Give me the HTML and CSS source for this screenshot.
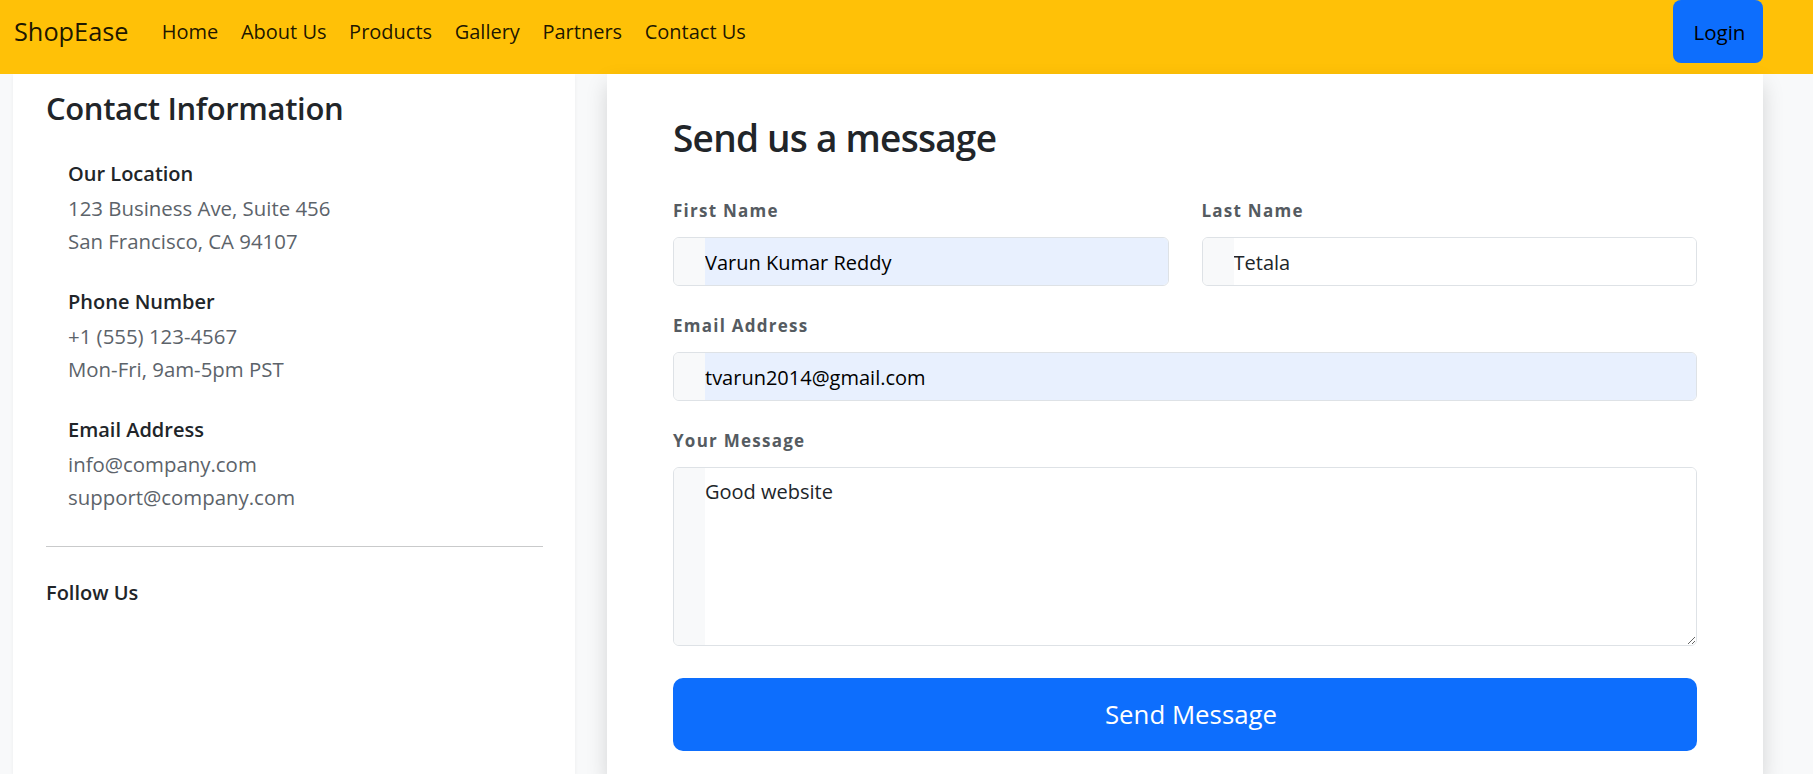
FILE: index.html
```html
<!DOCTYPE html>
<html lang="en">
<head>
<meta charset="utf-8">
<title>ShopEase - Contact Us</title>
<link rel="stylesheet" href="styles.css">
</head>
<body>
<nav class="navbar">
  <a class="brand" href="#">ShopEase</a>
  <ul class="nav-links">
    <li><a href="#">Home</a></li>
    <li><a href="#">About Us</a></li>
    <li><a href="#">Products</a></li>
    <li><a href="#">Gallery</a></li>
    <li><a href="#">Partners</a></li>
    <li><a href="#">Contact Us</a></li>
  </ul>
  <button class="login-btn" type="button">Login</button>
</nav>

<main class="page">
  <section class="info-card">
    <h3 class="info-title">Contact Information</h3>

    <div class="info-block">
      <h6 class="info-head">Our Location</h6>
      <p class="info-text">123 Business Ave, Suite 456<br>San Francisco, CA 94107</p>
    </div>

    <div class="info-block">
      <h6 class="info-head">Phone Number</h6>
      <p class="info-text">+1 (555) 123-4567<br>Mon-Fri, 9am-5pm PST</p>
    </div>

    <div class="info-block last">
      <h6 class="info-head">Email Address</h6>
      <p class="info-text">info@company.com<br>support@company.com</p>
    </div>

    <hr class="divider">

    <h6 class="follow-title">Follow Us</h6>
  </section>

  <section class="form-card">
    <h2 class="form-title">Send us a message</h2>
    <form class="contact-form">
      <div class="form-row">
        <div class="field">
          <label class="field-label">First Name</label>
          <div class="input-group">
            <span class="input-prefix"></span>
            <input class="input autofilled" type="text" value="Varun Kumar Reddy">
          </div>
        </div>
        <div class="field">
          <label class="field-label">Last Name</label>
          <div class="input-group">
            <span class="input-prefix"></span>
            <input class="input" type="text" value="Tetala">
          </div>
        </div>
      </div>
      <div class="field">
        <label class="field-label">Email Address</label>
        <div class="input-group">
          <span class="input-prefix"></span>
          <input class="input autofilled" type="email" value="tvarun2014@gmail.com">
        </div>
      </div>
      <div class="field">
        <label class="field-label">Your Message</label>
        <div class="input-group textarea-group">
          <span class="input-prefix"></span>
          <textarea class="textarea">Good website</textarea>
        </div>
      </div>
      <button class="send-btn" type="button">Send Message</button>
    </form>
  </section>
</main>
</body>
</html>
```

FILE: styles.css
```css
* {
  box-sizing: border-box;
}

html, body {
  margin: 0;
  padding: 0;
  height: 100%;
  overflow: hidden;
}

body {
  background: #f8f9fa;
  font-family: "Open Sans", "Noto Sans", sans-serif;
  color: #212529;
}

/* Navbar */
.navbar {
  height: 74px;
  background: #ffc107;
  display: flex;
  align-items: center;
  padding: 0 50px 11px 14px;
}

.brand {
  font-size: 25.3px;
  line-height: 37.5px;
  color: rgba(0, 0, 0, 0.9);
  text-decoration: none;
  margin-right: 22px;
}

.nav-links {
  list-style: none;
  display: flex;
  margin: 0;
  padding: 0;
  flex: 1;
}

.nav-links a {
  display: block;
  padding: 0 11.3px;
  font-size: 20px;
  line-height: 30px;
  color: rgba(0, 0, 0, 0.9);
  text-decoration: none;
}

.login-btn {
  width: 90px;
  height: 63px;
  border: none;
  border-radius: 8px;
  background: #0d6efd;
  color: #000;
  font-family: inherit;
  font-size: 20.5px;
  line-height: 30px;
  padding: 0 0 0 3px;
}

/* Page */
.page {
  display: flex;
  gap: 32px;
  padding: 0 50px 0 13px;
  height: calc(100vh - 74px);
}

.info-card {
  flex: 0 0 562px;
  background: #fff;
  padding: 16px 32px 0 33px;
  box-shadow: 0 2px 4px rgba(0, 0, 0, 0.05);
}

.info-title {
  margin: 0 0 34.5px;
  font-size: 31px;
  line-height: 37.8px;
  font-weight: 600;
  letter-spacing: -0.35px;
  color: #212529;
}

.info-block {
  padding-left: 22px;
  margin-bottom: 31.5px;
}

.info-block.last {
  margin-bottom: 0;
}

.info-head {
  margin: 0 0 5.9px;
  font-size: 20px;
  line-height: 24px;
  font-weight: 600;
  color: #212529;
}

.info-text {
  margin: 0;
  font-size: 20.4px;
  line-height: 33.3px;
  color: #5c636a;
}

.divider {
  margin: 31.3px 0 34.2px;
  border: 0;
  border-top: 1px solid #c9cacb;
  height: 0;
}

.follow-title {
  margin: 0;
  font-size: 20px;
  line-height: 24px;
  font-weight: 600;
  color: #212529;
}

/* Form card */
.form-card {
  flex: 1;
  background: #fff;
  padding: 42.4px 66px 0 66px;
  box-shadow: 0 10px 20px rgba(0, 0, 0, 0.15);
}

.form-title {
  margin: 0 0 40.5px;
  font-size: 37px;
  line-height: 44.4px;
  font-weight: 600;
  letter-spacing: -0.75px;
  color: #212529;
}

.contact-form {
  display: flex;
  flex-direction: column;
}

.form-row {
  display: grid;
  grid-template-columns: 1fr 1fr;
  column-gap: 33px;
}

.field {
  display: flex;
  flex-direction: column;
  margin-bottom: 30.7px;
}

.field-label {
  display: block;
  font-size: 17px;
  line-height: 20.4px;
  font-weight: 700;
  letter-spacing: 1.25px;
  color: #555b61;
  margin-bottom: 14.9px;
}

.input-group {
  display: flex;
  height: 49px;
  border: 1px solid #dee2e6;
  border-radius: 6px;
  overflow: hidden;
  background: #fff;
}

.input-prefix {
  flex: 0 0 31px;
  background: #f8f9fa;
}

.input {
  flex: 1;
  min-width: 0;
  border: none;
  outline: none;
  background: #fff;
  padding: 2px 12px 0 0;
  font-family: inherit;
  font-size: 20px;
  line-height: 45px;
  color: #212529;
}

.input.autofilled {
  background: #e8f0fe;
  color: #000;
}

.textarea-group {
  height: 179px;
}

.textarea {
  flex: 1;
  border: none;
  outline: none;
  background: #fff;
  padding: 9.5px 12px 0 0;
  font-family: inherit;
  font-size: 20px;
  line-height: 30px;
  color: #212529;
  resize: vertical;
}

.send-btn {
  margin-top: 1.9px;
  height: 72.7px;
  border: none;
  border-radius: 10px;
  background: #0d6efd;
  color: #fff;
  font-family: inherit;
  font-size: 25.8px;
  padding: 0 0 0 12px;
}
```
